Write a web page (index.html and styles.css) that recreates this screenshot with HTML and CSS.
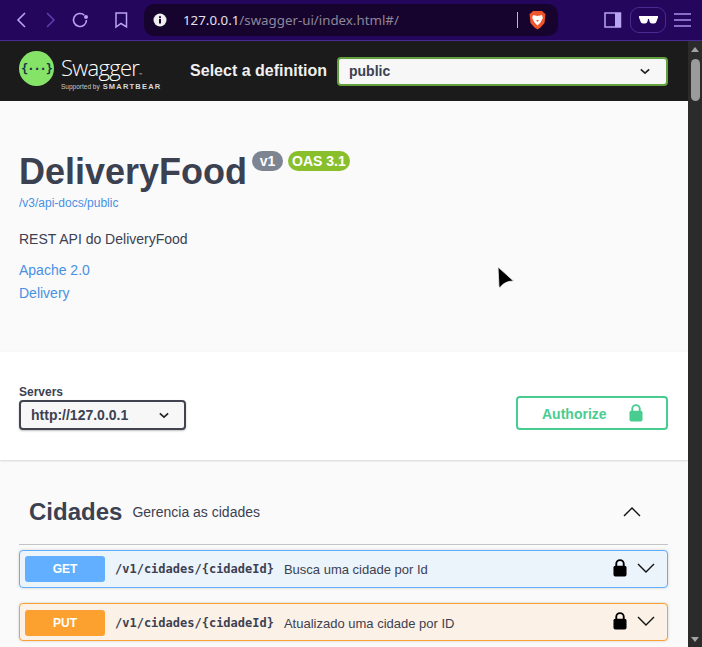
FILE: index.html
```html
<!DOCTYPE html>
<html lang="en">
<head>
  <meta charset="UTF-8">
  <title>Swagger UI</title>
  <link rel="stylesheet" href="styles.css">
</head>
<body>
  <header class="browser-bar">
    <div class="nav-icons">
      <svg class="ic" width="16" height="20" viewBox="0 0 16 20"><path d="M12 3 5 10l7 7" fill="none" stroke="#b9a4f2" stroke-width="1.6"/></svg>
      <svg class="ic ic-forward" width="16" height="20" viewBox="0 0 16 20"><path d="M4 3l7 7-7 7" fill="none" stroke="#5b3fa8" stroke-width="1.6"/></svg>
      <svg class="ic ic-reload" width="20" height="20" viewBox="0 0 20 20"><path d="M16.5 10a6.5 6.5 0 1 1-2.2-4.9" fill="none" stroke="#b9a4f2" stroke-width="1.6"/><circle cx="16" cy="7" r="2" fill="#b9a4f2"/></svg>
      <svg class="ic ic-mark" width="16" height="20" viewBox="0 0 16 20"><path d="M3 3h10.500v14L8 13.500 3 17z" fill="none" stroke="#b9a4f2" stroke-width="1.500"/></svg>
    </div>
    <div class="url-pill">
      <svg width="14" height="14" viewBox="0 0 14 14"><circle cx="7" cy="7" r="6.500" fill="#eee"/><rect x="6" y="6" width="2" height="4.500" fill="#16042e"/><rect x="6" y="3.300" width="2" height="1.800" fill="#16042e"/></svg>
      <div class="url-text"><span class="url-host">127.0.0.1</span>/swagger-ui/index.html#/</div>
      <span class="url-sep"></span>
      <svg width="17" height="20" viewBox="0 0 17 20"><path d="M4 1h9l2 2 1.500 1-1 9-4 4.500-3 2-3-2-4-4.500-1-9L2 3z" fill="#f1562b"/><path d="M4 5l4.500 1L13 5l.8 3-2.300 4.500-3 3-3-3L3.200 8z" fill="#fff"/><path d="M7 10h3L8.500 12z" fill="#f1562b"/></svg>
    </div>
    <div class="tool-icons">
      <svg width="18" height="16" viewBox="0 0 18 16"><rect x="1" y="1" width="15.500" height="14" fill="none" stroke="#b9a4f2" stroke-width="1.500"/><rect x="11" y="1" width="5.500" height="14" fill="#b9a4f2"/></svg>
      <div class="glasses-btn">
        <svg width="19" height="8" viewBox="0 0 19 8"><path d="M0 0h19v1.500l-1.500 4q-.5 2-2.500 2h-2q-2 0-2.500-2L10 3H9l-.5 2.500Q8 7.500 6 7.500H4q-2 0-2.500-2L0 1.500z" fill="#fff"/></svg>
      </div>
      <svg width="17" height="14" viewBox="0 0 17 14"><path d="M0 1h17M0 7h17M0 13h17" stroke="#a98df0" stroke-width="1.500"/></svg>
    </div>
  </header>

  <div class="viewport">
    <main class="page">
      <section class="topbar">
        <div class="logo">
          <svg width="35" height="35" viewBox="0 0 35 35">
            <circle cx="17.500" cy="17.500" r="17.500" fill="#85e368"/>
            <text x="17.500" y="21.500" text-anchor="middle" class="logo-mark">{···}</text>
          </svg>
          <div class="logo-words">
            <div class="logo-name">Swagger<sup class="logo-tm">™</sup></div>
            <div class="logo-sub"><span class="logo-by">Supported by</span> <span class="logo-bear">SMARTBEAR</span></div>
          </div>
        </div>
        <div class="definition">
          <span class="definition-label">Select a definition</span>
          <div class="definition-select">
            <span>public</span>
            <svg width="10" height="7" viewBox="0 0 12 8"><path d="M1 1.500l5 4.500 5-4.500" fill="none" stroke="#222" stroke-width="2"/></svg>
          </div>
        </div>
      </section>

      <section class="info">
        <div class="title-row">
          <h1>DeliveryFood</h1>
          <span class="badge badge-version">v1</span>
          <span class="badge badge-oas">OAS 3.1</span>
        </div>
        <a class="spec-link">/v3/api-docs/public</a>
        <p class="desc">REST API do DeliveryFood</p>
        <a class="info-link">Apache 2.0</a>
        <a class="info-link">Delivery</a>
      </section>

      <section class="schemes">
        <div class="servers">
          <span class="servers-label">Servers</span>
          <div class="servers-select">
            <span>http://127.0.0.1</span>
            <svg width="10" height="7" viewBox="0 0 12 8"><path d="M1 1.500l5 4.500 5-4.500" fill="none" stroke="#222" stroke-width="2"/></svg>
          </div>
        </div>
        <div class="authorize">
          <span class="authorize-text">Authorize</span>
          <svg width="14" height="18" viewBox="0 0 15 19"><path d="M3.500 8V5a4 4 0 0 1 8 0v3" fill="none" stroke="#49cc90" stroke-width="2"/><rect x="0.500" y="7" width="14" height="11.500" rx="2" fill="#49cc90"/></svg>
        </div>
      </section>

      <section class="tags">
        <div class="tag-head">
          <h3>Cidades</h3>
          <small>Gerencia as cidades</small>
          <svg class="tag-chev" width="18" height="10" viewBox="0 0 18 10"><path d="M1 9l8-8 8 8" fill="none" stroke="#111" stroke-width="1.400"/></svg>
        </div>
        <div class="op op-get">
          <span class="method">GET</span>
          <span class="path">/v1/cidades/{cidadeId}</span>
          <span class="summary">Busca uma cidade por Id</span>
          <svg class="op-lock" width="14" height="18" viewBox="0 0 15 19"><path d="M3.500 8V5a4 4 0 0 1 8 0v3" fill="none" stroke="#000" stroke-width="2"/><rect x="0.500" y="7" width="14" height="11.500" rx="2"/></svg>
          <svg class="op-chev" width="18" height="10" viewBox="0 0 18 10"><path d="M1 1l8 8 8-8" fill="none" stroke="#111" stroke-width="1.400"/></svg>
        </div>
        <div class="op op-put">
          <span class="method">PUT</span>
          <span class="path">/v1/cidades/{cidadeId}</span>
          <span class="summary">Atualizado uma cidade por ID</span>
          <svg class="op-lock" width="14" height="18" viewBox="0 0 15 19"><path d="M3.500 8V5a4 4 0 0 1 8 0v3" fill="none" stroke="#000" stroke-width="2"/><rect x="0.500" y="7" width="14" height="11.500" rx="2"/></svg>
          <svg class="op-chev" width="18" height="10" viewBox="0 0 18 10"><path d="M1 1l8 8 8-8" fill="none" stroke="#111" stroke-width="1.400"/></svg>
        </div>
      </section>
    </main>

    <aside class="scrollbar">
      <span class="arrow-up"></span>
      <span class="thumb"></span>
      <span class="arrow-down"></span>
    </aside>

    <svg class="cursor" width="18" height="23" viewBox="0 0 18 23"><path d="M1 1l15.500 14-5 .5Q6 17 3 21.500L2 21z" fill="#000" stroke="#eee" stroke-width="0.800"/></svg>
  </div>
</body>
</html>
```

FILE: styles.css
```css
* {
  box-sizing: border-box;
}
html, body {
  height: 100%;
}
body {
  margin: 0;
  overflow: hidden;
  display: flex;
  flex-direction: column;
  font-family: 'Liberation Sans', Arial, sans-serif;
  color: #3b4151;
  background-color: #fafafa;
}

/* browser chrome */
.browser-bar {
  height: 41px;
  flex: none;
  display: flex;
  align-items: center;
  background-color: #24065c;
  border-bottom: 1px solid #4a2a94;
}
.nav-icons {
  width: 144px;
  flex: none;
  display: flex;
  align-items: center;
  padding-left: 13px;
}
.ic-forward {
  margin-left: 14px;
}
.ic-reload {
  margin-left: 11px;
}
.ic-mark {
  margin-left: 23px;
}
.url-pill {
  width: 414px;
  height: 32px;
  flex: none;
  display: flex;
  align-items: center;
  padding: 0 12px 0 9px;
  border-radius: 10px;
  background-color: #16042e;
}
.url-text {
  flex: 1;
  margin-left: 16px;
  font-family: 'Noto Sans', sans-serif;
  font-size: 13.300px;
  color: #8d8799;
}
.url-host {
  color: #e4e1ea;
}
.url-sep {
  width: 1px;
  height: 16px;
  margin-right: 11px;
  background-color: #bdb8c6;
}
.tool-icons {
  flex: 1;
  display: flex;
  align-items: center;
  padding-left: 46px;
}
.glasses-btn {
  width: 36px;
  height: 26px;
  margin: 0 8px 0 8px;
  display: flex;
  align-items: center;
  justify-content: center;
  border: 1px solid #4a2a94;
  border-radius: 9px;
}

/* page */
.viewport {
  flex: 1;
  display: flex;
  min-height: 0;
  position: relative;
}
.page {
  flex: 1;
  min-width: 0;
  overflow: hidden;
}
.scrollbar {
  width: 14px;
  flex: none;
  display: flex;
  flex-direction: column;
  align-items: center;
  padding: 6px 0 5px;
  background-color: #2b2b2b;
}
.arrow-up {
  border: 4.5px solid transparent;
  border-top: 0;
  border-bottom: 5px solid #a3a3a3;
}
.thumb {
  width: 9px;
  height: 42px;
  margin-top: 7px;
  border-radius: 5px;
  background-color: #9b9b9b;
}
.arrow-down {
  margin-top: auto;
  border: 4.5px solid transparent;
  border-bottom: 0;
  border-top: 5px solid #a3a3a3;
}
.cursor {
  position: absolute;
  left: 497px;
  top: 225px;
}

/* swagger top bar */
.topbar {
  height: 60px;
  display: flex;
  align-items: center;
  justify-content: space-between;
  padding: 0 20px 0 19px;
  background-color: #1b1b1b;
}
.logo {
  align-self: flex-start;
  display: flex;
  align-items: flex-start;
  margin-top: 10px;
}
.logo-mark {
  font-family: 'DejaVu Sans Mono', monospace;
  font-size: 12px;
  font-weight: bold;
  letter-spacing: -1px;
  fill: #173647;
}
.logo-words {
  margin-left: 7px;
  color: #fff;
}
.logo-name {
  margin-top: 3px;
  font-family: 'Open Sans', sans-serif;
  font-size: 22px;
  font-weight: 300;
  line-height: 26px;
  letter-spacing: -0.700px;
}
.logo-tm {
  font-size: 4px;
  line-height: 0;
  vertical-align: baseline;
}
.logo-sub {
  margin-top: 3px;
  display: flex;
  align-items: center;
  gap: 3px;
  line-height: 8px;
}
.logo-by {
  font-size: 6.500px;
  color: #c9c9c9;
}
.logo-bear {
  font-size: 7.500px;
  font-weight: bold;
  letter-spacing: 1.200px;
  color: #d8d8d8;
}
.definition {
  display: flex;
  align-items: center;
  gap: 10px;
}
.definition-label {
  font-size: 16px;
  font-weight: bold;
  color: #f0f0f0;
}
.definition-select {
  width: 331px;
  height: 29px;
  display: flex;
  align-items: center;
  justify-content: space-between;
  padding: 0 16px 0 10px;
  border: 2px solid #62a03f;
  border-radius: 4px;
  background-color: #f7f7f7;
  font-size: 14px;
  font-weight: bold;
}

/* info block */
.info {
  height: 251px;
  padding: 50px 20px 0 19px;
  background-color: #fafafa;
}
.title-row {
  display: flex;
  align-items: flex-start;
}
h1 {
  margin: 0 5px 0 0;
  font-size: 36px;
  line-height: 42px;
  font-weight: bold;
}
.badge {
  height: 20px;
  margin-right: 5px;
  border-radius: 10px;
  font-size: 14px;
  font-weight: bold;
  line-height: 21px;
  color: #fff;
}
.badge-version {
  padding: 0 7.700px;
  background-color: #7d8492;
}
.badge-oas {
  padding: 0 4px;
  background-color: #8abf2c;
}
.spec-link {
  display: block;
  margin-top: 3px;
  font-size: 12px;
  line-height: 14px;
  color: #4990e2;
}
.desc {
  margin: 21px 0 0;
  font-size: 14px;
  line-height: 16px;
}
.info-link {
  display: block;
  margin-top: 7px;
  font-size: 14px;
  line-height: 16px;
  color: #4990e2;
}
.desc + .info-link {
  margin-top: 15px;
}

/* servers row */
.schemes {
  height: 108px;
  display: flex;
  align-items: flex-start;
  justify-content: space-between;
  padding: 33px 20px 0 19px;
  background-color: #fff;
  box-shadow: 0 1px 2px rgba(0, 0, 0, 0.15);
  position: relative;
}
.servers-label {
  display: block;
  font-size: 12px;
  font-weight: bold;
  line-height: 14px;
}
.servers-select {
  width: 167px;
  height: 30px;
  margin-top: 1px;
  display: flex;
  align-items: center;
  justify-content: space-between;
  padding: 0 15px 0 10px;
  border: 2px solid #41444e;
  border-radius: 4px;
  background-color: #f7f7f7;
  box-shadow: 0 1px 2px rgba(0, 0, 0, 0.25);
  font-size: 14px;
  font-weight: bold;
}
.authorize {
  width: 152px;
  height: 34px;
  margin-top: 11px;
  display: flex;
  align-items: center;
  justify-content: space-between;
  padding: 0 23px 0 24px;
  border: 2px solid #49cc90;
  border-radius: 4px;
  font-size: 14px;
  font-weight: bold;
  color: #49cc90;
}
.authorize-text {
  margin-top: 2px;
}

/* tag + operations */
.tags {
  padding: 0 20px 0 19px;
}
.tag-head {
  height: 85px;
  display: flex;
  align-items: center;
  padding: 19px 27px 0 10px;
  border-bottom: 1px solid #c3c4ca;
}
h3 {
  margin: 0;
  font-size: 24px;
  font-weight: bold;
}
.tag-head small {
  margin-left: 10px;
  font-size: 14px;
}
.tag-chev {
  margin-left: auto;
}
.op {
  height: 38px;
  margin-top: 5px;
  display: flex;
  align-items: center;
  padding: 0 12px 0 5px;
  border: 1px solid;
  border-radius: 4px;
  box-shadow: 0 0 3px rgba(0, 0, 0, 0.19);
}
.op + .op {
  margin-top: 15px;
}
.op-get {
  border-color: #61affe;
  background-color: #ebf3fb;
}
.op-put {
  border-color: #fca130;
  background-color: #fbf1e7;
}
.method {
  width: 80px;
  height: 26px;
  flex: none;
  border-radius: 3px;
  font-size: 12px;
  font-weight: bold;
  line-height: 26px;
  text-align: center;
  color: #fff;
}
.op-get .method {
  background-color: #61affe;
}
.op-put .method {
  background-color: #fca130;
}
.path {
  margin-left: 10px;
  font-family: 'DejaVu Sans Mono', monospace;
  font-size: 12px;
  font-weight: bold;
}
.summary {
  margin-left: 10px;
  font-size: 13px;
}
.op-put .method, .op-put .path, .op-put .summary {
  margin-top: 2px;
}
.op-lock {
  margin: 0 0 3px auto;
}
.op-chev {
  margin: 0 0 3px 10px;
}
```
